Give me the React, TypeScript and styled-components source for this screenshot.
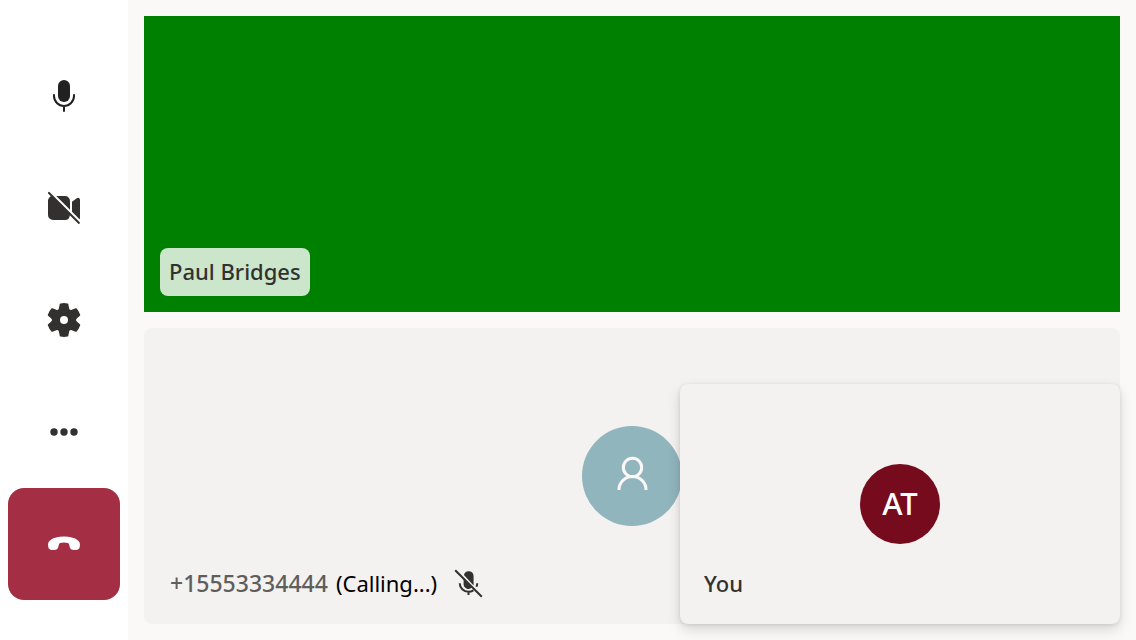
import React from "react";
import styled, { createGlobalStyle } from "styled-components";

const GlobalStyle = createGlobalStyle`
  *, *::before, *::after { box-sizing: border-box; }
  body {
    margin: 0;
    background: #faf9f8;
    color: #323130;
    font-family: "Segoe UI", "Noto Sans", "Open Sans", sans-serif;
    font-size: 22px;
    line-height: 32px;
  }
`;

const Screen = styled.div`
  display: flex;
  min-height: 100vh;
`;

const ControlBar = styled.nav`
  display: flex;
  flex: none;
  flex-direction: column;
  justify-content: center;
  width: 128px;
  padding: 0 8px;
  background: #ffffff;
`;

const ControlButton = styled.button<{ $danger?: boolean }>`
  display: flex;
  align-items: center;
  justify-content: center;
  height: 112px;
  padding: 0;
  border: 0;
  border-radius: ${(p) => (p.$danger ? "16px" : "0")};
  background: ${(p) => (p.$danger ? "#a42e43" : "transparent")};
  color: ${(p) => (p.$danger ? "#ffffff" : "#323130")};
  cursor: pointer;
`;

const Icon = styled.svg<{ $size?: number }>`
  display: block;
  flex: none;
  width: ${(p) => p.$size ?? 40}px;
  height: ${(p) => p.$size ?? 40}px;
  fill: currentColor;
`;

const Gallery = styled.main`
  position: relative;
  display: grid;
  flex: 1;
  grid-template-rows: 1fr 1fr;
  gap: 16px;
  min-width: 0;
  padding: 16px;
`;

const VideoTile = styled.section`
  display: flex;
  align-items: flex-end;
  padding: 16px;
  background: #008000;
`;

const NameTag = styled.span`
  padding: 7px 9px 9px;
  border-radius: 8px;
  background: rgba(255, 255, 255, 0.8);
  font-weight: 500;
`;

const AvatarTile = styled.section`
  display: grid;
  grid-template-rows: 1fr auto 1fr;
  justify-items: center;
  padding: 24px;
  border-radius: 8px;
  background: #f3f2f1;
`;

const LocalTile = styled(AvatarTile)`
  position: absolute;
  right: 16px;
  bottom: 16px;
  width: 440px;
  height: 240px;
  box-shadow: 0 6px 14px rgba(0, 0, 0, 0.13), 0 1px 4px rgba(0, 0, 0, 0.11);
`;

const Avatar = styled.div<{ $size: number; $color: string }>`
  display: flex;
  grid-row: 2;
  align-items: center;
  justify-content: center;
  width: ${(p) => p.$size}px;
  height: ${(p) => p.$size}px;
  padding-bottom: 2px;
  border-radius: 50%;
  background: ${(p) => p.$color};
  color: #ffffff;
  font-size: 31px;
  font-weight: 500;
`;

const TileFooter = styled.div`
  display: flex;
  grid-row: 3;
  align-items: center;
  align-self: end;
  justify-self: start;
  gap: 8px;
  padding-bottom: 1px;
  font-weight: 500;
`;

const PhoneNumber = styled.span`
  padding-left: 2px;
  color: #605e5c;
  font-size: 23px;
`;

const CallState = styled.span`
  color: #000000;
  font-weight: 400;
`;

const MutedMark = styled.span`
  display: flex;
  height: 32px;
  align-items: center;
  padding-left: 6px;
`;

const MicIcon = () => (
  <Icon viewBox="0 0 20 20" color="#212121" aria-hidden="true">
    <path d="M10 13a3 3 0 0 0 3-3V5a3 3 0 0 0-6 0v5a3 3 0 0 0 3 3Z" />
    <path d="M5 9.5v.5a5 5 0 0 0 10 0v-.5M10 15v2.5" fill="none" stroke="currentColor" strokeLinecap="round" />
  </Icon>
);

const CameraOffIcon = () => (
  <Icon viewBox="0 0 20 20" aria-hidden="true">
    <path d="m2.85 2.15 15 15a.5.5 0 0 1-.7.7l-4.25-4.24A2.5 2.5 0 0 1 10.5 16h-6A2.5 2.5 0 0 1 2 13.5v-7c0-1.01.58-1.87 1.43-2.36L2.15 2.85a.5.5 0 1 1 .7-.7Z" />
    <path d="M13 6.5v4.38L6.12 4h4.38A2.5 2.5 0 0 1 13 6.5ZM14 6.93v4.95l3.76 3.76c.15-.17.24-.4.24-.67V5.95a1 1 0 0 0-1.63-.78L14 6.93Z" />
  </Icon>
);

const SettingsIcon = () => (
  <Icon viewBox="0 0 20 20" aria-hidden="true">
    <path d="M1.91 7.38A8.5 8.5 0 0 1 3.7 4.3a.5.5 0 0 1 .54-.13l1.92.68a1 1 0 0 0 1.32-.76l.36-2a.5.5 0 0 1 .4-.4 8.53 8.53 0 0 1 3.55 0c.2.04.35.2.38.4l.37 2a1 1 0 0 0 1.32.76l1.92-.68a.5.5 0 0 1 .54.13 8.5 8.5 0 0 1 1.78 3.08c.06.2 0 .4-.15.54l-1.56 1.32a1 1 0 0 0 0 1.52l1.56 1.32a.5.5 0 0 1 .15.54 8.5 8.5 0 0 1-1.78 3.08.5.5 0 0 1-.54.13l-1.92-.68a1 1 0 0 0-1.32.76l-.37 2a.5.5 0 0 1-.38.4 8.53 8.53 0 0 1-3.56 0 .5.5 0 0 1-.39-.4l-.36-2a1 1 0 0 0-1.32-.76l-1.92.68a.5.5 0 0 1-.54-.13 8.5 8.5 0 0 1-1.78-3.08.5.5 0 0 1 .15-.54l1.56-1.32a1 1 0 0 0 0-1.52L2.06 7.92a.5.5 0 0 1-.15-.54ZM8 10a2 2 0 1 0 4 0 2 2 0 0 0-4 0Z" />
  </Icon>
);

const MoreIcon = () => (
  <Icon viewBox="0 0 20 20" aria-hidden="true">
    <circle cx="5" cy="10" r="1.85" />
    <circle cx="10" cy="10" r="1.85" />
    <circle cx="15" cy="10" r="1.85" />
  </Icon>
);

const HangUpIcon = () => (
  <Icon viewBox="0 0 20 20" aria-hidden="true">
    <path d="M17.96 10.6l-.1.95c-.12.88-.8 1.45-1.65 1.45h-1.6c-.8 0-1.45-.45-1.66-1.2l-.42-1.55c-.1-.37-.3-.62-.62-.72A6.5 6.5 0 0 0 10 9.2c-.72 0-1.32.1-1.91.33-.32.1-.52.35-.62.72l-.42 1.55c-.21.75-.86 1.2-1.66 1.2h-1.6c-.85 0-1.53-.57-1.65-1.45l-.1-.95c-.1-1 .26-1.83 1.1-2.5C4.63 6.9 7.1 6.3 10 6.3s5.37.6 6.86 1.8c.84.67 1.2 1.5 1.1 2.5Z" />
  </Icon>
);

const MicOffIcon = () => (
  <Icon viewBox="0 0 20 20" $size={35} role="img" aria-label="Muted">
    <path d="M7.2 7.5V10a2.8 2.8 0 0 0 4.8 2.2L7.2 7.5ZM12.9 11.1V5.8a2.8 2.8 0 0 0-5.5-.7l5.5 6Z" />
    <path d="M5 9.8c0 2.8 2.2 4.9 5 4.9 1 0 2-.3 2.8-.8M15 9.8c0 .8-.2 1.5-.5 2.1M10 14.7v1.8M2.4 2.4l15.2 15.2" fill="none" stroke="currentColor" strokeWidth="1.15" />
  </Icon>
);

const PersonIcon = () => (
  <Icon viewBox="0 0 40 40" aria-hidden="true">
    <g fill="none" stroke="#faf9f8" strokeWidth="3">
      <circle cx="20.5" cy="12.5" r="9.2" />
      <path d="M7 35v-.5a13.5 13 0 0 1 27 0v.5" />
    </g>
  </Icon>
);

export default function App() {
  return (
    <>
      <GlobalStyle />
      <Screen>
        <ControlBar aria-label="Call controls">
          <ControlButton type="button" aria-label="Mute"><MicIcon /></ControlButton>
          <ControlButton type="button" aria-label="Turn on camera"><CameraOffIcon /></ControlButton>
          <ControlButton type="button" aria-label="Devices"><SettingsIcon /></ControlButton>
          <ControlButton type="button" aria-label="More"><MoreIcon /></ControlButton>
          <ControlButton type="button" aria-label="Leave" $danger><HangUpIcon /></ControlButton>
        </ControlBar>
        <Gallery>
          <VideoTile>
            <NameTag>Paul Bridges</NameTag>
          </VideoTile>
          <AvatarTile>
            <Avatar $size={100} $color="#91b5bd"><PersonIcon /></Avatar>
            <TileFooter>
              <PhoneNumber>+15553334444</PhoneNumber>
              <CallState>(Calling...)</CallState>
              <MutedMark><MicOffIcon /></MutedMark>
            </TileFooter>
          </AvatarTile>
          <LocalTile>
            <Avatar $size={80} $color="#750b1c">AT</Avatar>
            <TileFooter>You</TileFooter>
          </LocalTile>
        </Gallery>
      </Screen>
    </>
  );
}
